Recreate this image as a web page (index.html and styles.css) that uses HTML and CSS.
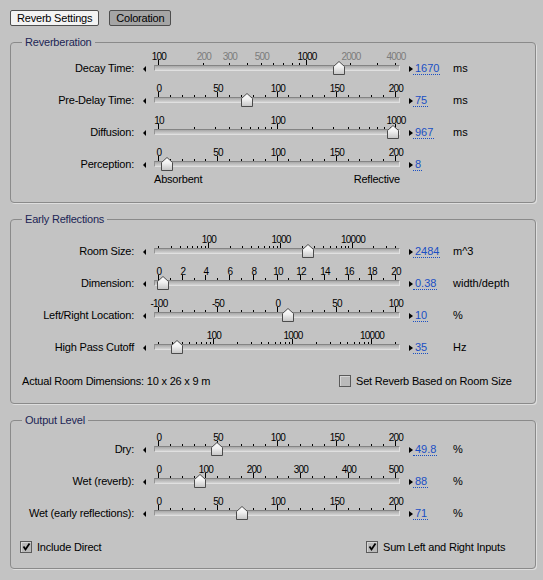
FILE: index.html
```html
<!DOCTYPE html>
<html lang="en">
<head>
    <meta charset="UTF-8">
    <title>Reverb Settings</title>
    <link rel="stylesheet" href="styles.css">
</head>
<body>

<div class="tabs">
    <button class="tab tab-active">Reverb Settings</button>
    <button class="tab">Coloration</button>
</div>

<fieldset class="group group-reverb">
    <legend>Reverberation</legend>
    <div class="sliders" data-group="reverb"></div>
</fieldset>

<fieldset class="group group-early">
    <legend>Early Reflections</legend>
    <div class="sliders" data-group="early"></div>
    <div class="group-footer room-footer">
        <span class="room-dims">Actual Room Dimensions: 10 x 26 x 9 m</span>
        <label class="check"><span class="box"></span>Set Reverb Based on Room Size</label>
    </div>
</fieldset>

<fieldset class="group group-output">
    <legend>Output Level</legend>
    <div class="sliders" data-group="output"></div>
    <div class="group-footer output-footer">
        <label class="check check-first"><span class="box"><svg width="10" height="10"><polyline points="2.5,4.5 4.5,7.5 8.5,1.5"/></svg></span>Include Direct</label>
        <label class="check"><span class="box"><svg width="10" height="10"><polyline points="2.5,4.5 4.5,7.5 8.5,1.5"/></svg></span>Sum Left and Right Inputs</label>
    </div>
</fieldset>

<!-- shared thumb shape -->
<svg class="defs" width="0" height="0">
    <defs>
        <linearGradient id="thumb-grad" x1="0" y1="0" x2="0" y2="1">
            <stop offset="0" stop-color="#ffffff"/>
            <stop offset="0.45" stop-color="#f0f0f0"/>
            <stop offset="1" stop-color="#c4c4c4"/>
        </linearGradient>
        <symbol id="thumb-shape" viewBox="0 0 12 14">
            <polygon points="0.5,5.5 6,0.5 11.5,5.5 11.5,13.5 0.5,13.5" fill="url(#thumb-grad)" stroke="#4c4c4c"/>
        </symbol>
    </defs>
</svg>

<script>
    // slider area: value min sits at x=8, value max at x=245
    const X0 = 8;
    const X1 = 245;

    function linTicks(min, max, step) {
        const out = [];
        const n = Math.round((max - min) / step);
        for (let i = 0; i <= n; i++) out.push(min + i * step);
        return out;
    }

    function logTicks(min, max) {
        const out = [];
        for (let d = Math.pow(10, Math.floor(Math.log10(min))); d <= max; d *= 10) {
            for (let k = 1; k <= 9; k++) {
                const v = k * d;
                if (v >= min && v <= max) out.push(v);
            }
        }
        return out;
    }

    function lin(label, min, max, step, labelStep, value, unit) {
        return {
            label, min, max, value, unit,
            ticks: linTicks(min, max, step),
            labels: linTicks(min, max, labelStep).map(v => [v])
        };
    }

    function log(label, min, max, labels, value, unit) {
        return { label, min, max, value, unit, log: true, ticks: logTicks(min, max), labels };
    }

    const groups = {
        reverb: [
            log('Decay Time:', 100, 4000, [[100], [200, 1], [300, 1], [500, 1], [1000], [2000, 1], [4000, 1]], 1670, 'ms'),
            lin('Pre-Delay Time:', 0, 200, 10, 50, 75, 'ms'),
            log('Diffusion:', 10, 1000, [[10], [100], [1000]], 967, 'ms'),
            Object.assign(lin('Perception:', 0, 200, 10, 50, 8, ''), { ends: ['Absorbent', 'Reflective'] })
        ],
        early: [
            log('Room Size:', 20, 40000, [[100], [1000], [10000]], 2484, 'm^3'),
            lin('Dimension:', 0, 20, 1, 2, 0.38, 'width/depth'),
            lin('Left/Right Location:', -100, 100, 10, 50, 10, '%'),
            log('High Pass Cutoff', 20, 20000, [[100], [1000], [10000]], 35, 'Hz')
        ],
        output: [
            lin('Dry:', 0, 200, 10, 50, 49.8, '%'),
            lin('Wet (reverb):', 0, 500, 25, 100, 88, '%'),
            lin('Wet (early reflections):', 0, 200, 10, 50, 71, '%')
        ]
    };

    function pos(s, v) {
        const t = s.log
            ? Math.log(v / s.min) / Math.log(s.max / s.min)
            : (v - s.min) / (s.max - s.min);
        return X0 + t * (X1 - X0);
    }

    function buildRow(s) {
        const major = s.labels.filter(l => !l[1]).map(l => l[0]);
        let marks = '';
        s.ticks.forEach(v => {
            const x = Math.round(pos(s, v));
            if (major.includes(v)) marks += `<rect x="${x}" y="11" width="1" height="5"/>`;
            else marks += `<rect x="${x}" y="14" width="1" height="2"/>`;
        });
        s.labels.forEach(l => {
            const x = Math.round(pos(s, l[0])) + 1;
            marks += `<text x="${x}" y="11" text-anchor="middle"${l[1] ? ' class="dim"' : ''}>${l[0]}</text>`;
        });

        const thumbLeft = Math.round(pos(s, s.value)) - 6;
        const ends = s.ends
            ? `<div class="ends"><span>${s.ends[0]}</span><span>${s.ends[1]}</span></div>`
            : '';

        const row = document.createElement('div');
        row.className = s.ends ? 'row row-tall' : 'row';
        row.innerHTML = `
            <span class="row-label">${s.label}</span>
            <span class="arrow-left"></span>
            <div class="slider">
                <svg class="scale" width="254" height="16">${marks}</svg>
                <div class="track"></div>
                <svg class="thumb" width="12" height="14" style="left: ${thumbLeft}px"><use href="#thumb-shape"/></svg>
                ${ends}
            </div>
            <span class="arrow-right"></span>
            <span class="value"><span>${s.value}</span></span>
            <span class="unit">${s.unit}</span>`;
        return row;
    }

    document.querySelectorAll('.sliders').forEach(box => {
        groups[box.dataset.group].forEach(s => box.appendChild(buildRow(s)));
    });
</script>

</body>
</html>
```

FILE: styles.css
```css
body {
    margin: 0;
    padding: 10px 7px 0 10px;
    background-color: #c3c3c3;
    font-family: "Liberation Sans", Arial, sans-serif;
    font-size: 11px;
    color: #000;
}
.tabs {
    display: flex;
    gap: 10px;
    height: 16px;
    margin-bottom: 9px;
}
.tab {
    height: 16px;
    padding: 0 6px;
    border: 1px solid #4e4e4e;
    border-radius: 2px;
    background-color: #a5a5a5;
    font-family: inherit;
    font-size: 11px;
    letter-spacing: -0.2px;
    line-height: 14px;
    color: #000;
}
.tab-active {
    background-color: #f3f3f3;
}
.group {
    min-width: 0;
    margin: 0 0 9px 0;
    padding: 0 0 16px 0;
    border: 1px solid #8a8a8a;
    border-radius: 4px;
    box-shadow: 1px 1px 0 #dedede;
}
.group legend {
    margin-left: 11px;
    padding: 0 3px;
    line-height: 14px;
    letter-spacing: -0.2px;
    color: #1c2555;
}
.group-early {
    padding-top: 6px;
    padding-bottom: 15px;
}
.group-output {
    padding-top: 3px;
    padding-bottom: 14px;
}
.row {
    display: flex;
    height: 32px;
}
.row-tall {
    height: auto;
}
.row > * {
    flex: none;
}
.row-label {
    width: 123px;
    padding-top: 13px;
    line-height: 13px;
    text-align: right;
    letter-spacing: -0.2px;
    white-space: nowrap;
}
.arrow-left {
    width: 0;
    height: 0;
    margin: 17px 0 0 9px;
    border-top: 3px solid transparent;
    border-bottom: 3px solid transparent;
    border-right: 3px solid #000;
}
.slider {
    position: relative;
    width: 254px;
    margin-left: 4px;
}
.scale {
    display: block;
    overflow: visible;
}
.scale text {
    font-family: "Liberation Sans", Arial, sans-serif;
    font-size: 10px;
    letter-spacing: -0.8px;
    fill: #000;
}
.scale text.dim {
    fill: #7c7c7c;
}
.track {
    box-sizing: border-box;
    width: 246px;
    height: 6px;
    margin-left: 4px;
    border-top: 1px solid #848484;
    border-left: 1px solid #949494;
    border-right: 1px solid #e0e0e0;
    border-bottom: 1px solid #e0e0e0;
    background: linear-gradient(#a8a8a8, #d4d4d4);
}
.thumb {
    position: absolute;
    top: 12px;
}
.ends {
    display: flex;
    justify-content: space-between;
    width: 246px;
    margin: 6px 0 0 4px;
    line-height: 13px;
    letter-spacing: -0.2px;
}
.arrow-right {
    width: 0;
    height: 0;
    margin: 17px 0 0 5px;
    border-top: 3px solid transparent;
    border-bottom: 3px solid transparent;
    border-left: 4px solid #000;
}
.value {
    width: 40px;
    padding-top: 13px;
}
.value span {
    display: inline-block;
    padding: 0 1px 0 2px;
    line-height: 12px;
    color: #1a4fc4;
    border-bottom: 1px dotted #1a4fc4;
}
.unit {
    padding-top: 13px;
    line-height: 13px;
}
.group-footer {
    display: flex;
    align-items: center;
    height: 14px;
    margin-top: 14px;
}
.room-footer {
    padding-left: 11px;
}
.room-dims {
    width: 317px;
    letter-spacing: -0.2px;
}
.output-footer {
    padding-left: 9px;
}
.check {
    display: flex;
    align-items: center;
    gap: 5px;
    letter-spacing: -0.2px;
}
.check-first {
    width: 346px;
}
.box {
    box-sizing: border-box;
    width: 12px;
    height: 12px;
    border: 1px solid #5a5a5a;
    background-color: #bababa;
    box-shadow: inset 1px 1px 0 #d6d6d6;
}
.box svg {
    display: block;
}
.box polyline {
    fill: none;
    stroke: #000;
    stroke-width: 1.8;
}
.defs {
    display: block;
}
```
